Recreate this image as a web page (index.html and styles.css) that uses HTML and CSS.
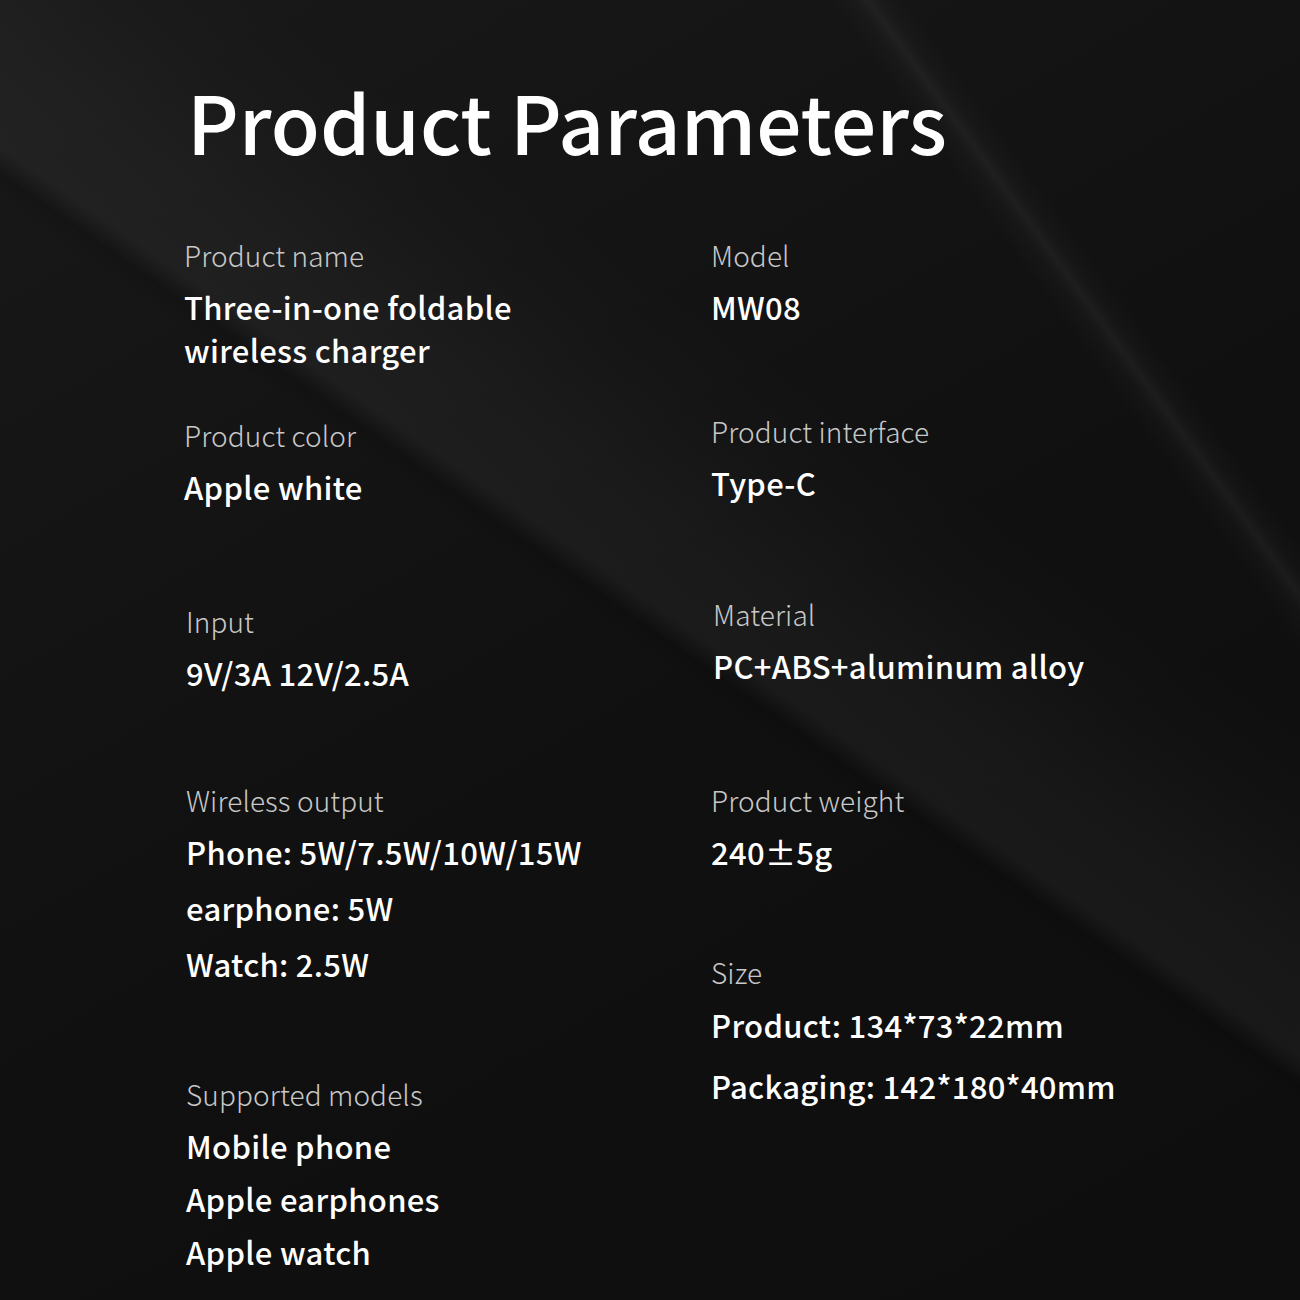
FILE: index.html
```html
<!DOCTYPE html>
<html lang="en">
<head>
<meta charset="utf-8">
<title>Product Parameters</title>
<link rel="stylesheet" href="styles.css">
</head>
<body>
<main class="page">
  <h1 class="title">Product Parameters</h1>
  <div class="columns">
    <section class="col col-left">
      <div class="param">
        <div class="label">Product name</div>
        <div class="value"><p>Three-in-one foldable</p><p>wireless charger</p></div>
      </div>
      <div class="param gap-l2">
        <div class="label">Product color</div>
        <div class="value"><p>Apple white</p></div>
      </div>
      <div class="param gap-l3 shift">
        <div class="label">Input</div>
        <div class="value"><p>9V/3A 12V/2.5A</p></div>
      </div>
      <div class="param gap-l4 list-56 shift">
        <div class="label">Wireless output</div>
        <div class="value"><p>Phone: 5W/7.5W/10W/15W</p><p>earphone: 5W</p><p>Watch: 2.5W</p></div>
      </div>
      <div class="param gap-l5 list-53 shift">
        <div class="label">Supported models</div>
        <div class="value"><p>Mobile phone</p><p>Apple earphones</p><p>Apple watch</p></div>
      </div>
    </section>
    <section class="col col-right">
      <div class="param">
        <div class="label">Model</div>
        <div class="value"><p>MW08</p></div>
      </div>
      <div class="param gap-r2">
        <div class="label">Product interface</div>
        <div class="value"><p>Type-C</p></div>
      </div>
      <div class="param gap-r3 shift">
        <div class="label">Material</div>
        <div class="value"><p>PC+ABS+aluminum alloy</p></div>
      </div>
      <div class="param gap-r4">
        <div class="label">Product weight</div>
        <div class="value"><p>240±5g</p></div>
      </div>
      <div class="param gap-r5 list-61">
        <div class="label">Size</div>
        <div class="value"><p>Product: 134*73*22mm</p><p>Packaging: 142*180*40mm</p></div>
      </div>
    </section>
  </div>
</main>
</body>
</html>
```
FILE: styles.css
```css
html, body {
  margin: 0;
  padding: 0;
}
body {
  width: 1300px;
  height: 1300px;
  overflow: hidden;
  background-color: #111;
  background-image:
    /* thin streak top-right */
    linear-gradient(54deg, transparent 0, transparent 1435px, rgba(255,255,255,0.02) 1455px, rgba(255,255,255,0.05) 1466px, rgba(255,255,255,0.02) 1477px, transparent 1497px),
    /* broad diagonal sheen */
    linear-gradient(35deg, transparent 0, transparent 900px, rgba(0,0,0,0.12) 922px, rgba(255,255,255,0.045) 945px, rgba(255,255,255,0.035) 1020px, rgba(255,255,255,0.01) 1130px, transparent 1220px),
    /* general tone */
    linear-gradient(150deg, #191919 0, #141414 30%, #101010 55%, #0e0e0e 100%);
  font-family: "Noto Sans CJK SC", "Noto Sans", sans-serif;
  color: #fff;
}
.page {
  padding: 80px 0 0 184px;
}
.title {
  margin: 0 0 0 3px;
  font-size: 80px;
  line-height: 1;
  font-weight: 500;
  letter-spacing: 0;
}
.columns {
  display: grid;
  grid-template-columns: 527px 1fr;
  margin-top: 75px;
}
.shift {
  padding-left: 2px;
}
.label {
  font-size: 28px;
  font-weight: 300;
  line-height: 40px;
  letter-spacing: 0.1px;
  color: #c8c8c8;
}
.value {
  margin-top: 10px;
  font-size: 31px;
  font-weight: 500;
  line-height: 43px;
  letter-spacing: 0.3px;
}
.value p {
  margin: 0;
}
.list-56 .value { line-height: 56px; margin-top: 4px; }
.list-53 .value { line-height: 53px; margin-top: 5px; }
.list-61 .value { line-height: 61px; margin-top: 2px; }

.gap-l2 { margin-top: 44px; }
.gap-l3 { margin-top: 93px; }
.gap-l4 { margin-top: 86px; }
.gap-l5 { margin-top: 82px; }

.gap-r2 { margin-top: 83px; }
.gap-r3 { margin-top: 90px; }
.gap-r4 { margin-top: 93px; }
.gap-r5 { margin-top: 79px; }
```
